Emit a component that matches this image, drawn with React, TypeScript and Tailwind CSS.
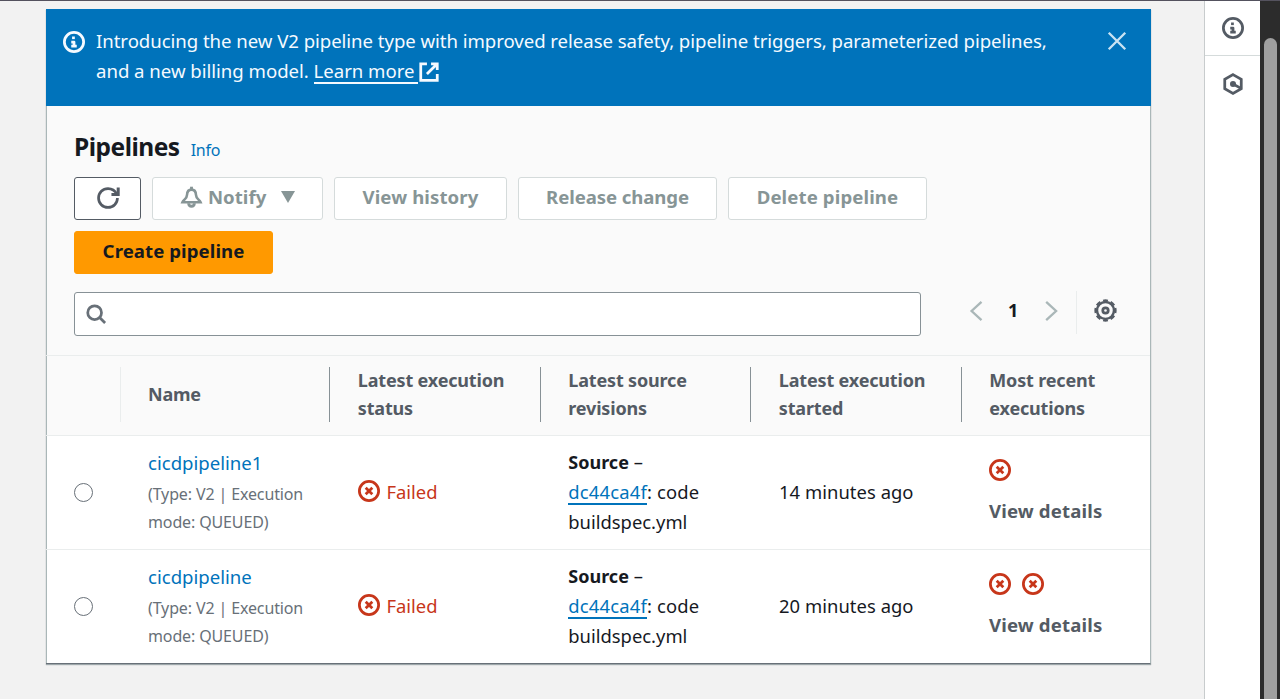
import type { ReactNode } from "react";

function Icon({ children, className = "" }: { children: ReactNode; className?: string }) {
  return (
    <svg viewBox="0 0 16 16" className={`block size-[22px] shrink-0 fill-none stroke-current stroke-2 ${className}`}>
      {children}
    </svg>
  );
}

const InfoIcon = ({ className = "" }) => (
  <Icon className={className}>
    <circle cx="8" cy="8" r="7" />
    <path d="M8 11V8H6M10 11H6" strokeLinejoin="round" />
    <path d="M7.600 5.900V4" />
  </Icon>
);

const FailedIcon = () => (
  <Icon className="text-[#c7361a]">
    <circle cx="8" cy="8" r="7" />
    <path d="m10.400 5.600-4.800 4.800M10.400 10.400 5.600 5.600" />
  </Icon>
);

function Button({ children, className }: { children: ReactNode; className: string }) {
  return (
    <button className={`flex h-[43px] items-center justify-center rounded-[3px] border pb-[3px] text-[18.600px] font-bold whitespace-nowrap ${className}`}>
      {children}
    </button>
  );
}

const disabled = "border-[#d5dbdb] bg-white text-[#879596]";

const headers = [
  { lines: ["Latest execution", "status"], sep: true },
  { lines: ["Latest source", "revisions"], sep: true },
  { lines: ["Latest execution", "started"], sep: true },
  { lines: ["Most recent", "executions"], sep: false },
];

const rows = [
  { name: "cicdpipeline1", ago: "14 minutes ago", failures: 1 },
  { name: "cicdpipeline", ago: "20 minutes ago", failures: 2 },
];

const columns = "grid grid-cols-[74.500px_209.500px_210.500px_210.500px_210.500px_188.500px]";

export default function App() {
  return (
    <div className="flex h-[699px] w-[1280px] overflow-hidden border-t border-[#54525e] bg-[#f2f2f2] font-['Noto_Sans',sans-serif] text-[18px] text-[#16191f]">
      <main className="w-[1204px] shrink-0 pt-[8px] pl-[46px]">
        <section className="h-[655px] w-[1105px] border-r border-b border-[#aab7b8] border-b-[#687078] bg-white shadow-[0_1px_1px_0_rgba(0,28,36,0.35),inset_1px_0_0_0_#aab7b8]">
          <div className="flex h-[96.500px] w-[1105px] bg-[#0073bb] pt-[16.500px] pl-[17px] text-[#f5faff]">
            <InfoIcon className="mt-[5px]" />
            <p className="ml-[11px] w-[1009px] text-[18.600px] leading-[30px] whitespace-nowrap">
              <span className="tracking-[-0.045px]">Introducing the new V2 pipeline type with improved release safety, pipeline triggers, parameterized pipelines,</span>
              <br />
              <span className="flex items-start tracking-[-0.020px]">
                and a new billing model.&nbsp;
                <a className="h-[28px] w-[104px] border-b-2">Learn more</a>
                <Icon className="mt-[5px]">
                  <path d="M6.500 2H2v12h12V9.500M9.500 2H14v4.500M14 2 6.500 9.500" />
                </Icon>
              </span>
            </p>
            <Icon className="mt-[4.500px] ml-[0.500px] text-[#c9e3f3]">
              <path d="m2 2 12 12M14 2 2 14" strokeWidth="1.700" />
            </Icon>
          </div>

          <div className="h-[249.500px] bg-[#fafafa] px-[28px] pt-[23.500px] shadow-[inset_1px_0_0_0_#aab7b8]">
            <div className="flex h-[36px] items-baseline">
              <h1 className="text-[24.500px] leading-[36px] font-bold tracking-[-0.500px]">Pipelines</h1>
              <a className="ml-[11px] text-[16px] tracking-[-0.200px] text-[#0073bb]">Info</a>
            </div>
            <div className="mt-[12px] flex flex-wrap gap-x-[11px] gap-y-[10.500px]">
              <Button className="w-[67.300px] border-[#545b64] bg-white text-[#545b64]">
                <Icon className="mt-[1px] size-[24px]">
                  <path d="M15 8c0 3.900-3.100 7-7 7s-7-3.100-7-7 3.100-7 7-7c2.800 0 5.300 1.700 6.400 4" transform="translate(.8 .8) scale(.9)" />
                  <path d="M10.300 5.600h4.500V1" />
                </Icon>
              </Button>
              <Button className={`w-[170.700px] ${disabled}`}>
                <Icon className="size-[23px]">
                  <path d="M8 .5v2" />
                  <path d="M8 2.500c2.100 0 3 1.500 3.100 3.600.1 3 2.400 3.200 3.200 5.200H1.700c.8-2 3.100-2.200 3.200-5.200C5 4 5.900 2.500 8 2.500Z" strokeWidth="1.800" />
                  <path d="M6 12c.1 2.800 3.900 2.800 4 0" />
                </Icon>
                <span className="ml-[5px] tracking-[0.050px]">Notify</span>
                <svg viewBox="0 0 14 12" className="ml-[15px] h-[12px] w-[14px] fill-current">
                  <path d="M0 0h14L7 12Z" />
                </svg>
              </Button>
              <Button className={`w-[173px] ${disabled}`}>
                <span className="tracking-[0.100px]">View history</span>
              </Button>
              <Button className={`w-[199px] tracking-[-0.090px] ${disabled}`}>Release change</Button>
              <Button className={`w-[199px] tracking-[0.120px] ${disabled}`}>Delete pipeline</Button>
              <Button className="w-[199px] border-[#ff9900] bg-[#ff9900] tracking-[0.080px] text-[#16191f]">Create pipeline</Button>
            </div>
            <div className="mt-[18px] flex">
              <label className="flex h-[44px] w-[847px] items-center rounded-[3px] border border-[#879196] bg-white pl-[10px] text-[#687078]">
                <Icon>
                  <circle cx="7" cy="7" r="5" />
                  <path d="m10.600 10.600 4 4" />
                </Icon>
              </label>
              <div className="ml-[43.500px] flex h-[38px] items-center text-[#aab7b8]">
                <Icon>
                  <path d="m12 1.300-7.200 6.700 7.200 6.700" strokeWidth="1.700" />
                </Icon>
                <span className="w-[53.500px] text-center text-[18px] font-bold text-[#16191f]">1</span>
                <Icon>
                  <path d="m4.500 1.300 7.200 6.700-7.200 6.700" strokeWidth="1.700" />
                </Icon>
                <span className="mt-[3px] ml-[14px] h-[43px] w-px bg-[#eaeded]" />
                <Icon className="ml-[17px] size-[23px] text-[#545b64]">
                  <circle cx="8" cy="8" r="5.900" strokeWidth="1.700" />
                  <circle cx="8" cy="8" r="7" strokeWidth="1.500" pathLength="160" strokeDasharray="12.500 7.500" strokeDashoffset="6.250" />
                  <circle cx="8" cy="8" r="1.900" strokeWidth="1.900" />
                </Icon>
              </div>
            </div>
          </div>

          <div className={`${columns} h-[81px] border-y border-[#eaeded] bg-[#fafafa] pt-[11px] pb-[13px] leading-[27.500px] font-bold text-[#545b64] shadow-[inset_1px_0_0_0_#aab7b8]`}>
            <div className="border-r border-[#eaeded]" />
            <div className="flex items-center border-r border-[#879196] pl-[27.500px] tracking-[-0.200px]">Name</div>
            {headers.map((h, i) => (
              <div key={i} className={`pl-[27.800px] tracking-[-0.170px] whitespace-nowrap ${h.sep ? "border-r border-[#879196]" : ""}`}>
                {h.lines[0]}
                <br />
                {h.lines[1]}
              </div>
            ))}
          </div>

          {rows.map((row, i) => (
            <div key={row.name} className={`${columns} h-[114px] items-center whitespace-nowrap ${i === 0 ? "border-b border-[#eaeded]" : "pb-px"}`}>
              <div className="pl-[28px]">
                <span className="block size-[19px] rounded-full border-[1.500px] border-[#687078]" />
              </div>
              <div className="pl-[27.500px]">
                <a className="block text-[18.600px] leading-[28px] text-[#0073bb]">{row.name}</a>
                <p className="mt-[4px] text-[16px] leading-[27.500px] tracking-[-0.130px] text-[#687078]">
                  (Type: V2 | Execution
                  <br />
                  mode: QUEUED)
                </p>
              </div>
              <div className="flex items-center gap-[7px] pb-[2px] pl-[27.500px] text-[18.400px] text-[#c7361a]">
                <FailedIcon />
                Failed
              </div>
              <div className="pb-[1.500px] pl-[27.800px] text-[18.400px] leading-[30px]">
                <b className="text-[18px]">Source</b> –
                <br />
                <a className="inline-block h-[28px] border-b-2 border-[#0073bb] tracking-[0.200px] text-[#0073bb]">dc44ca4f</a>
                <span className="tracking-[0.150px]">: code</span>
                <br />
                buildspec.yml
              </div>
              <div className="pb-px pl-[28px] text-[18.400px] tracking-[0.050px]">{row.ago}</div>
              <div className="pl-[27.500px]">
                <div className="flex gap-[11px]">
                  {Array.from({ length: row.failures }, (_, n) => (
                    <FailedIcon key={n} />
                  ))}
                </div>
                <a className="mt-[15px] block text-[18.600px] leading-[30px] font-bold tracking-[0.150px] text-[#545b64]">View details</a>
              </div>
            </div>
          ))}
        </section>
      </main>

      <aside className="w-[56px] shrink-0 border-l border-[#c8cccd] bg-white text-[#545b64]">
        <div className="flex h-[55px] items-center justify-center border-b border-[#d5dbdb]">
          <InfoIcon />
        </div>
        <div className="flex h-[55px] items-center justify-center">
          <Icon>
            <path d="M8 1.200 14 4.600v6.800l-6 3.400-6-3.400V4.600Z" />
            <circle cx="8" cy="8" r="2.200" fill="currentColor" stroke="none" />
            <path d="m8 8 5.500 3" />
          </Icon>
        </div>
      </aside>
      <div className="w-[20px] shrink-0 bg-[#2c2c2c] pt-[37px] pl-[4px]">
        <div className="h-[680px] w-[13px] rounded-full bg-[#9f9f9f]" />
      </div>
    </div>
  );
}
